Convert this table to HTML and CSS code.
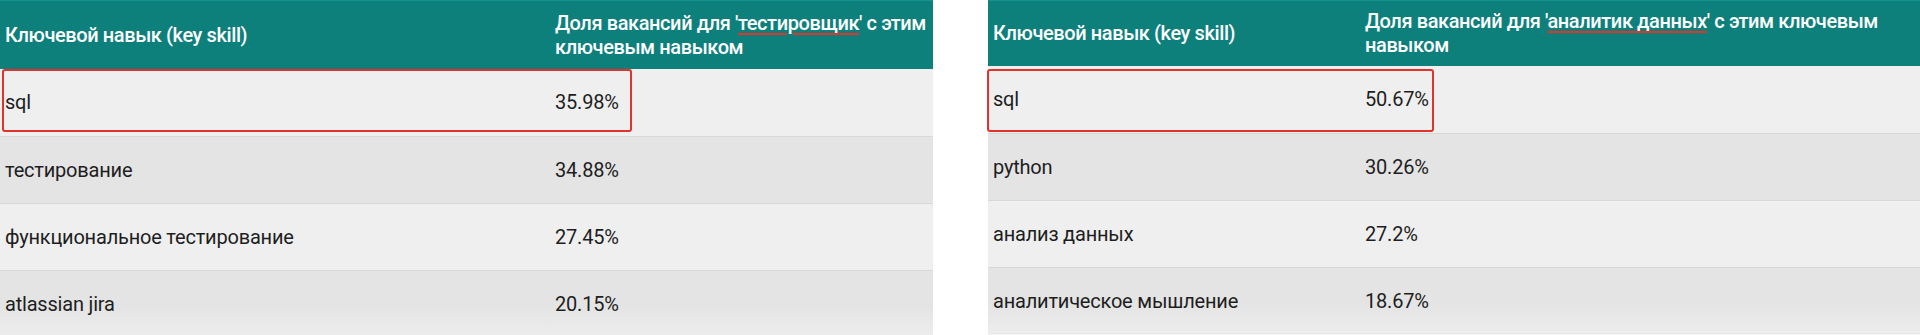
FILE: index.html
```html
<!DOCTYPE html>
<html lang="ru">
<head>
<meta charset="utf-8">
<title>Ключевые навыки</title>
<link rel="stylesheet" href="styles.css">
</head>
<body>
<div class="page">
  <div class="panel panel-left">
    <table class="skills">
      <colgroup><col class="c1-left"><col></colgroup>
      <thead>
        <tr>
          <th>Ключевой навык (key skill)</th>
          <th class="wide">Доля вакансий для '<span class="mark">тестировщик</span>' с этим<br>ключевым навыком</th>
        </tr>
      </thead>
      <tbody>
        <tr><td>sql</td><td>35.98%</td></tr>
        <tr><td>тестирование</td><td>34.88%</td></tr>
        <tr><td>функциональное тестирование</td><td>27.45%</td></tr>
        <tr><td>atlassian jira</td><td>20.15%</td></tr>
      </tbody>
    </table>
    <div class="highlight highlight-left"></div>
  </div>
  <div class="panel panel-right">
    <table class="skills skills-compact">
      <colgroup><col class="c1-right"><col></colgroup>
      <thead>
        <tr>
          <th>Ключевой навык (key skill)</th>
          <th class="wide">Доля вакансий для '<span class="mark">аналитик данных</span>' с этим ключевым<br>навыком</th>
        </tr>
      </thead>
      <tbody>
        <tr><td>sql</td><td>50.67%</td></tr>
        <tr><td>python</td><td>30.26%</td></tr>
        <tr><td>анализ данных</td><td>27.2%</td></tr>
        <tr><td>аналитическое мышление</td><td>18.67%</td></tr>
      </tbody>
    </table>
    <div class="highlight highlight-right"></div>
  </div>
</div>
</body>
</html>
```

FILE: styles.css
```css
* { box-sizing: border-box; }

html, body {
  margin: 0;
  padding: 0;
  background: #ffffff;
  height: 335px;
  overflow: hidden;
}

.page {
  display: flex;
  gap: 55px;
  font-family: Roboto, "Noto Sans", sans-serif;
  font-size: 20px;
  line-height: 24px;
  color: #1e1e1e;
}

.panel {
  position: relative;
}

.panel-left { width: 933px; }
.panel-right { width: 932px; }

.skills {
  width: 100%;
  border-collapse: collapse;
  table-layout: fixed;
}

.c1-left { width: 550px; }
.c1-right { width: 372px; }

.skills th {
  background: #0e807c;
  color: #ffffff;
  font-weight: 500;
  letter-spacing: -0.4px;
  text-align: left;
  vertical-align: middle;
  padding: 10px 5px;
  height: 68px;
  border-top: 1px solid #17918c;
  overflow: hidden;
}

.skills th.wide { white-space: nowrap; }

.skills-compact th {
  padding: 8px 5px 9px;
  height: 65px;
}

.mark {
  text-decoration: underline;
  text-decoration-color: #e2342d;
  text-decoration-thickness: 2px;
  text-underline-offset: 3px;
}

.skills td {
  padding: 21px 5px;
  height: 67px;
  vertical-align: middle;
  border-bottom: 1px solid #d8d8d8;
  font-weight: 400;
  letter-spacing: -0.2px;
}

.skills tbody tr:nth-child(odd) td { background: #efefef; }
.skills tbody tr:nth-child(even) td { background: #e4e4e4; }
.skills tbody tr:last-child td {
  background: linear-gradient(#e4e4e4 55%, #ededed);
  border-bottom-color: #f4f4f4;
}

.highlight {
  position: absolute;
  top: 69px;
  height: 63px;
  border: 2px solid #e0332c;
  border-radius: 3px;
  pointer-events: none;
}

.highlight-left { left: 2px; width: 630px; }
.highlight-right { left: -1px; width: 447px; }
```
